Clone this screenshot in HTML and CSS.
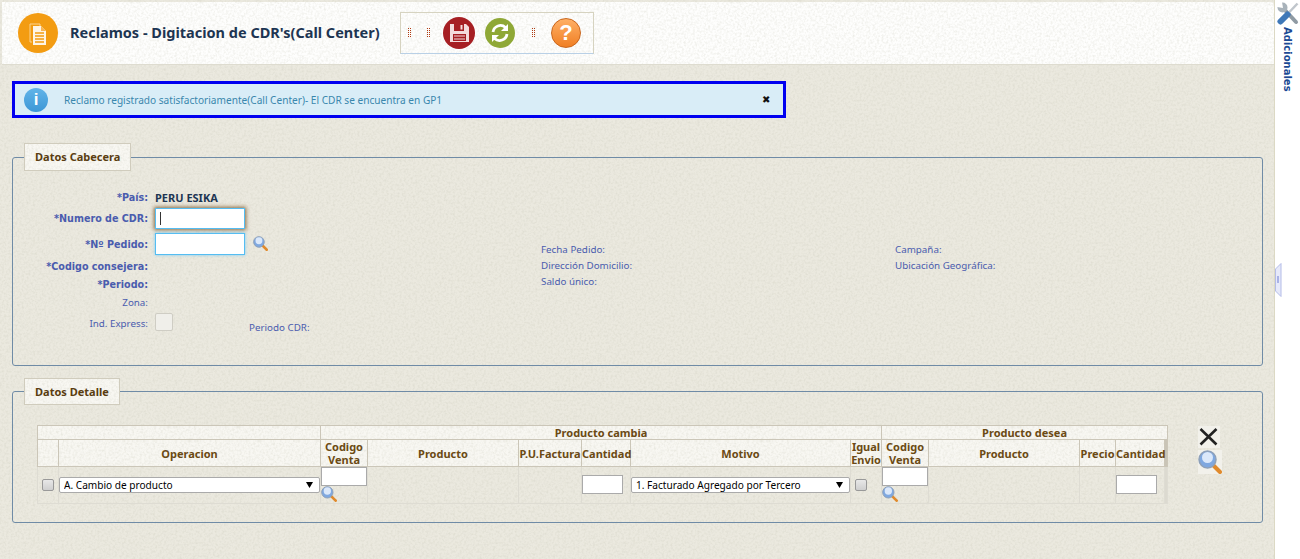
FILE: index.html
```html
<!DOCTYPE html>
<html lang="es">
  <head>
    <meta charset="UTF-8" />
    <title>Reclamos - Digitacion de CDR's(Call Center)</title>
    <link rel="stylesheet" href="styles.css">
  </head>
  <body>
    <svg class="defs" width="0" height="0">
      <symbol id="lupa" viewBox="0 0 24 24">
        <path d="M14 14l8 8" stroke="#e08a2c" stroke-width="4" stroke-linecap="round" />
        <circle cx="9.500" cy="9.500" r="8.500" fill="#7fa8e0" stroke="#8ea0b8" stroke-width="1.500" />
        <circle cx="9.500" cy="7.500" r="5.500" fill="#dbe8fa" />
      </symbol>
    </svg>

    <div class="main">
      <div class="header">
        <div class="pageIcon">
          <svg width="40" height="40" viewBox="0 0 40 40">
            <circle cx="20" cy="20" r="20" fill="#f39c12" />
            <path d="M12 11h10v2M12 11v18h2" fill="none" stroke="#fbd391" stroke-width="1" />
            <path d="M15 13h8l5 5v14H15z" fill="#fff" fill-opacity=".9" />
            <path d="M23 13v5h5" fill="#f7b555" />
            <path d="M17 20h9M17 23h9M17 26h9M17 29h9" stroke="#f39c12" stroke-width="1.300" />
          </svg>
        </div>
        <h1 class="pageTitle">Reclamos - Digitacion de CDR's(Call Center)</h1>
        <div class="toolbar">
          <span class="grip"></span>
          <span class="grip"></span>
          <svg class="btnSave" width="32" height="32" viewBox="0 0 32 32">
            <circle cx="16" cy="16" r="16" fill="#a61f23" />
            <path d="M7 7h16l3 3v15H7z" fill="#f3dcdc" />
            <rect x="11" y="7" width="10" height="7" fill="#a61f23" />
            <rect x="17.500" y="8" width="2" height="4.500" fill="#f3dcdc" />
            <rect x="10" y="17" width="13" height="7" fill="#a61f23" />
            <path d="M11 19h11M11 22h11" stroke="#f3dcdc" stroke-width="1.200" />
          </svg>
          <svg class="btnRefresh" width="30" height="30" viewBox="0 0 30 30">
            <circle cx="15" cy="15" r="15" fill="#8fa836" />
            <path d="M8 14a7.500 7.500 0 0 1 12.500-4.500" fill="none" stroke="#fff" stroke-width="2.800" />
            <path d="M23 6v7h-7z" fill="#fff" />
            <path d="M22 16a7.500 7.500 0 0 1-12.500 4.500" fill="none" stroke="#fff" stroke-width="2.800" />
            <path d="M7 24v-7h7z" fill="#fff" />
          </svg>
          <span class="grip gripLast"></span>
          <span class="btnHelp">?</span>
        </div>
      </div>

      <div class="content">
        <div class="message">
          <span class="infoIcon">i</span>
          <span class="messageText">Reclamo registrado satisfactoriamente(Call Center)- El CDR se encuentra en GP1</span>
          <span class="messageClose">✖</span>
        </div>

        <fieldset class="box boxCabecera">
          <legend>Datos Cabecera</legend>
          <div class="cabecera">
            <div class="formGrid">
              <label class="req rowPais">*País:</label>
              <span class="value">PERU ESIKA</span>

              <label class="req rowInput">*Numero de CDR:</label>
              <input class="textBox focused" type="text" />

              <label class="req rowInput rowPedido">*Nº Pedido:</label>
              <div class="withIcon">
                <input class="textBox glow" type="text" />
                <svg class="lupaSmall"><use href="#lupa" /></svg>
              </div>

              <label class="req rowText rowFirst">*Codigo consejera:</label>
              <span></span>

              <label class="req rowText">*Periodo:</label>
              <span></span>

              <label class="opt rowText">Zona:</label>
              <span></span>

              <label class="opt rowCheck">Ind. Express:</label>
              <div class="expressCell">
                <span class="bigCheck"></span>
                <label class="opt periodoCdr">Periodo CDR:</label>
              </div>
            </div>

            <div class="infoCol infoMiddle">
              <label class="opt">Fecha Pedido:</label>
              <label class="opt">Dirección Domicilio:</label>
              <label class="opt">Saldo único:</label>
            </div>

            <div class="infoCol">
              <label class="opt">Campaña:</label>
              <label class="opt">Ubicación Geográfica:</label>
            </div>
          </div>
        </fieldset>

        <fieldset class="box boxDetalle">
          <legend>Datos Detalle</legend>
          <div class="detalle">
            <table class="grid">
              <colgroup>
                <col class="c21" /><col class="c262" /><col class="c47" /><col class="c151" />
                <col class="c63" /><col class="c49" /><col class="c220" /><col class="c31" />
                <col class="c47" /><col class="c151" /><col class="c36" /><col class="c49" /><col class="c3" />
              </colgroup>
              <thead>
                <tr class="groupRow">
                  <th colspan="2"></th>
                  <th colspan="6">Producto cambia</th>
                  <th colspan="5">Producto desea</th>
                </tr>
                <tr class="titleRow">
                  <th></th>
                  <th>Operacion</th>
                  <th>Codigo Venta</th>
                  <th>Producto</th>
                  <th>P.U.Factura</th>
                  <th>Cantidad</th>
                  <th>Motivo</th>
                  <th>Igual Envio</th>
                  <th>Codigo Venta</th>
                  <th>Producto</th>
                  <th>Precio</th>
                  <th>Cantidad</th>
                  <th class="scrollCell"></th>
                </tr>
              </thead>
              <tbody>
                <tr>
                  <td><input class="smallCheck" type="checkbox" /></td>
                  <td>
                    <select class="combo">
                      <option>A. Cambio de producto</option>
                    </select>
                  </td>
                  <td class="codeCell">
                    <input class="gridInput codeInput" type="text" />
                    <svg class="lupaCell"><use href="#lupa" /></svg>
                  </td>
                  <td></td>
                  <td></td>
                  <td><input class="gridInput qtyInput" type="text" /></td>
                  <td>
                    <select class="combo">
                      <option>1. Facturado Agregado por Tercero</option>
                    </select>
                  </td>
                  <td><input class="smallCheck" type="checkbox" /></td>
                  <td class="codeCell">
                    <input class="gridInput codeInput" type="text" />
                    <svg class="lupaCell"><use href="#lupa" /></svg>
                  </td>
                  <td></td>
                  <td></td>
                  <td><input class="gridInput qtyInput" type="text" /></td>
                  <td class="scrollBody"></td>
                </tr>
              </tbody>
            </table>

            <div class="gridActions">
              <svg class="actionX" width="22" height="22" viewBox="0 0 22 22">
                <path d="M2.500 3l16 15.500M18.500 3l-16 15.500" stroke="#222" stroke-width="2.600" />
              </svg>
              <svg class="actionLupa"><use href="#lupa" /></svg>
            </div>
          </div>
        </fieldset>
      </div>
    </div>

    <div class="sidebar">
      <svg width="22" height="23" viewBox="0 0 22 23">
        <path d="M6 6l13 14" stroke="#8f9aa3" stroke-width="4" stroke-linecap="round" />
        <circle cx="5.500" cy="5.500" r="5" fill="#a8b2ba" />
        <path d="M0 0h5l1 6-6-1z" fill="#fff" />
        <path d="M20.500 1.500l-9.500 10" stroke="#c0c6cc" stroke-width="2.500" />
        <path d="M10.500 12.500l-7 7" stroke="#3f78b8" stroke-width="6" stroke-linecap="round" />
      </svg>
      <span class="sidebarText">Adicionales</span>
      <svg class="sidebarTab" width="7" height="34" viewBox="0 0 7 34">
        <path d="M6 .500L.500 6v22L6 33.500z" fill="#e6e9fa" stroke="#b4bce8" />
        <rect x="2" y="13" width="2" height="7" fill="#a9b2e6" />
      </svg>
    </div>
  </body>
</html>
```

FILE: styles.css
```css
:root {
  --paper: url("data:image/svg+xml,%3Csvg xmlns='http://www.w3.org/2000/svg' width='300' height='300'%3E%3Cfilter id='n'%3E%3CfeTurbulence type='fractalNoise' baseFrequency='.45' numOctaves='2'/%3E%3CfeColorMatrix values='0 0 0 0 .5 0 0 0 0 .5 0 0 0 0 .4 0 0 0 .5 -.2'/%3E%3C/filter%3E%3Crect width='300' height='300' filter='url(%23n)'/%3E%3C/svg%3E");
}

body {
  margin: 0;
  height: 559px;
  overflow: hidden;
  display: flex;
  background-color: #fff;
  font-family: "DejaVu Sans", Verdana, sans-serif;
  font-size: 10px;
}

.defs {
  position: absolute;
}

.main {
  width: 1275px;
  background: var(--paper), #ebe9df;
  border-right: 1px solid #dcd9c4;
  box-sizing: border-box;
}

/* header */
.header {
  margin: 2px 0 0 2px;
  height: 63px;
  box-sizing: border-box;
  padding: 10px 0 0 16px;
  display: flex;
  align-items: flex-start;
  background: var(--paper), #fefefd;
  border-bottom: 1px solid #dedcd0;
  border-top-right-radius: 4px;
}

.pageIcon {
  width: 40px;
  height: 40px;
  flex: none;
  margin-top: 1px;
}

.pageTitle {
  width: 309px;
  margin: 0 21px 0 12px;
  font-family: "Noto Sans", sans-serif;
  font-size: 14.500px;
  line-height: 40px;
  font-weight: bold;
  color: #1d3552;
  white-space: nowrap;
}

.toolbar {
  width: 194px;
  height: 42px;
  box-sizing: border-box;
  display: flex;
  align-items: center;
  border: 1px solid #d6d3c0;
  border-bottom-color: #b9d0e6;
  padding-left: 7px;
}

.grip {
  width: 3px;
  height: 10px;
  margin-right: 16px;
  background:
    linear-gradient(to right, transparent 1px, #fbfbfa 1px, #fbfbfa 2px, transparent 2px),
    repeating-linear-gradient(#b03a10 0 1px, transparent 1px 2px);
}

.grip + .btnSave {
  margin-left: -3px;
  margin-right: 10px;
}

.gripLast {
  margin-left: 17px;
}

.btnHelp {
  width: 30px;
  height: 30px;
  box-sizing: border-box;
  border-radius: 50%;
  border: 1px solid #c9661c;
  background: linear-gradient(#ffb066, #f07f24);
  color: #fff;
  font: bold 22px/28px "Liberation Sans", sans-serif;
  text-align: center;
}

/* content */
.content {
  padding: 16px 0 0 12px;
}

.message {
  width: 774px;
  height: 37px;
  box-sizing: border-box;
  display: flex;
  align-items: center;
  border: 3px solid #0000f0;
  background-color: #d9edf7;
  padding-left: 9px;
}

.infoIcon {
  width: 24px;
  height: 24px;
  flex: none;
  border-radius: 50%;
  background: linear-gradient(#62b4e8, #3d97d6);
  color: #fff;
  font: bold 17px/24px "Liberation Sans", sans-serif;
  text-align: center;
}

.messageText {
  margin-left: 16px;
  width: 698px;
  flex: none;
  color: #3a87ad;
  font-family: "Noto Sans", sans-serif;
  font-size: 10.100px;
  white-space: nowrap;
}

.messageClose {
  font-size: 10px;
  color: #111;
}

.box {
  width: 1251px;
  box-sizing: border-box;
  margin: 0;
  padding: 0;
  border: 1px solid #6f8ba6;
  border-radius: 3px;
}

.box legend {
  margin-left: 11px;
  padding: 0 10px;
  line-height: 25px;
  box-sizing: border-box;
  border: 1px solid #d0ccbd;
  background: var(--paper), #f8f7f2;
  color: #5a3d10;
  font-family: "Noto Sans", sans-serif;
  font-size: 11px;
  font-weight: bold;
}

.boxCabecera {
  margin-top: 25px;
  height: 223px;
}

.boxCabecera legend {
  line-height: 26px;
}

.boxDetalle {
  margin-top: 12px;
  height: 145px;
}

/* datos cabecera */
.cabecera {
  display: flex;
  padding-top: 18px;
}

.formGrid {
  width: 528px;
  flex: none;
  display: grid;
  grid-template-columns: 135px 1fr;
  column-gap: 7px;
  align-items: center;
}

.req,
.opt {
  color: #4a5cae;
  white-space: nowrap;
}

.formGrid > label {
  text-align: right;
}

.req {
  font-size: 9.600px;
  font-weight: bold;
}

.opt {
  font-family: "Noto Sans", sans-serif;
  font-size: 9.800px;
}

.rowPais {
  line-height: 17px;
}

.rowInput {
  line-height: 25px;
}

.rowPedido {
  line-height: 23px;
  padding-top: 2px;
}

.rowText {
  line-height: 18px;
}

.rowFirst {
  padding-top: 2px;
}

.value {
  font-family: "Noto Sans", sans-serif;
  font-size: 11px;
  font-weight: bold;
  color: #1d3552;
}

.textBox {
  width: 90px;
  height: 22px;
  box-sizing: border-box;
  display: block;
  padding: 0;
  border: 1px solid #55bdf2;
  outline: none;
}

.glow {
  box-shadow: 0 0 3px #7ccdf5;
}

.focused {
  height: 21px;
  background: linear-gradient(#333, #333) no-repeat 4px 3px / 1px 13px, #fff;
  box-shadow: 0 0 4px 1px #8a6a40;
}

.withIcon {
  display: flex;
  align-items: center;
}

.lupaSmall {
  width: 15px;
  height: 15px;
  margin-left: 8px;
}

.expressCell {
  display: flex;
  align-items: flex-end;
  height: 22px;
}

.bigCheck {
  width: 18px;
  height: 18px;
  box-sizing: border-box;
  margin-bottom: 3px;
  border: 1px solid #cfcdc4;
  border-radius: 2px;
  background-color: #f0efea;
}

.periodoCdr {
  margin-left: 76px;
}

.infoCol {
  padding-top: 53px;
  display: flex;
  flex-direction: column;
  line-height: 16px;
}

.infoMiddle {
  width: 354px;
  flex: none;
}

/* datos detalle */
.detalle {
  display: flex;
  padding: 20px 0 0 24px;
}

.grid {
  width: 1130px;
  height: 78px;
  flex: none;
  table-layout: fixed;
  border-collapse: collapse;
  color: #6b4a14;
}

.c21 { width: 21px; }
.c262 { width: 262px; }
.c47 { width: 47px; }
.c151 { width: 151px; }
.c63 { width: 63px; }
.c49 { width: 49px; }
.c220 { width: 220px; }
.c31 { width: 31px; }
.c36 { width: 36px; }
.c3 { width: 3px; }

.grid th {
  padding: 0;
  border: 1px solid #cbc6b8;
  background: var(--paper), #f8f7f2;
  font-family: "Noto Sans", sans-serif;
  font-size: 11px;
  font-weight: bold;
  line-height: 13px;
}

.groupRow th {
  height: 13px;
}

.titleRow th {
  height: 26px;
}

.grid th.scrollCell {
  background: #c9c4b6;
}

.grid td {
  height: 35px;
  padding: 0 0 1px;
  border: 1px solid #dedcd3;
}

.grid td.scrollBody {
  background-color: #dcdad0;
}

.combo {
  width: 100%;
  height: 16px;
  box-sizing: border-box;
  display: block;
  appearance: none;
  padding: 0 0 0 4px;
  border: 1px solid #aaa;
  border-radius: 2px;
  background: #fff url("data:image/svg+xml,%3Csvg xmlns='http://www.w3.org/2000/svg' width='7' height='6'%3E%3Cpath d='M0 0h7L3.500 6z' fill='%23000'/%3E%3C/svg%3E") no-repeat right 6px center;
  color: #000;
  font-family: "Noto Sans", sans-serif;
  font-size: 10.100px;
}

.smallCheck {
  width: 12px;
  height: 12px;
  margin: 0 0 0 4px;
  appearance: none;
  vertical-align: middle;
  border: 1px solid #999;
  border-radius: 2px;
  background: linear-gradient(#e8e8e8, #cfcfcf);
}

.gridInput {
  height: 19px;
  box-sizing: border-box;
  padding: 0;
  border: 1px solid #aaa;
  background-color: #fff;
}

.codeCell {
  vertical-align: top;
}

.codeInput {
  width: 46px;
  display: block;
}

.qtyInput {
  width: 41px;
  display: block;
}

.lupaCell {
  width: 16px;
  height: 16px;
  display: block;
}

.gridActions {
  margin: 1px 0 0 30px;
  display: flex;
  flex-direction: column;
  align-items: flex-start;
}

.actionX {
  background-color: #f2f1eb;
}

.actionLupa {
  width: 24px;
  height: 24px;
  margin-top: 2px;
  background-color: #f2f1eb;
}

/* barra derecha */
.sidebar {
  position: relative;
  flex: 1;
  display: flex;
  flex-direction: column;
  align-items: center;
  padding-top: 2px;
}

.sidebarText {
  margin-top: 2px;
  writing-mode: vertical-rl;
  font-size: 10px;
  font-weight: bold;
  color: #1c4a94;
}

.sidebarTab {
  position: absolute;
  left: 0;
  top: 263px;
}
```
